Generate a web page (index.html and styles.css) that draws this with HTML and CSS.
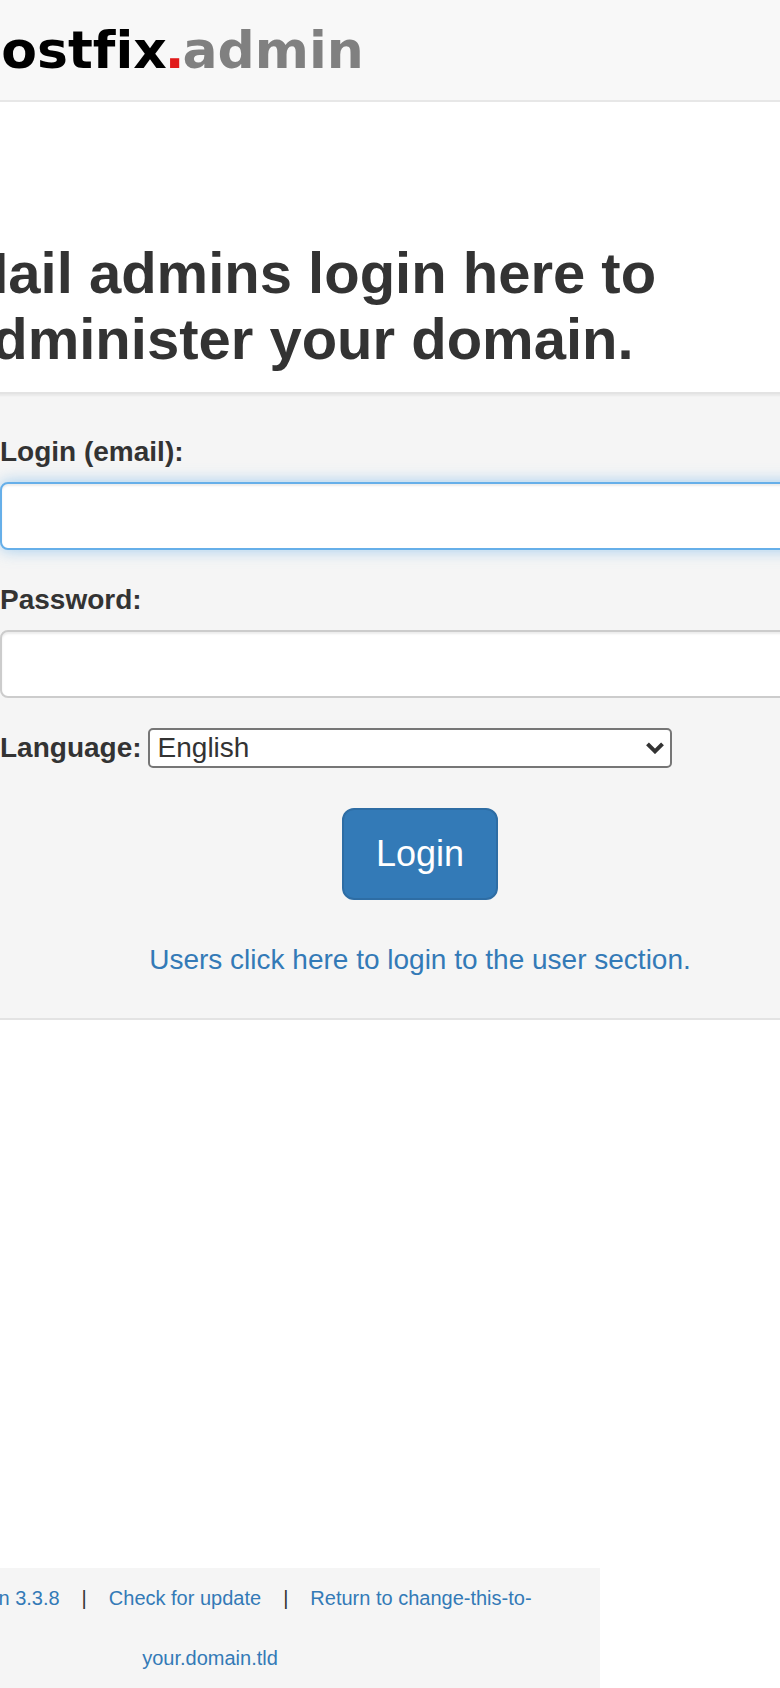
FILE: index.html
```html
<!DOCTYPE html>
<html lang="en">
<head>
<meta charset="utf-8">
<meta name="viewport" content="width=device-width, initial-scale=1">
<title>Postfix Admin - Login</title>
<link rel="stylesheet" href="styles.css">
</head>
<body class="page">
  <header class="navbar">
    <div class="logo"><span class="logo-name">postfix</span><span class="logo-dot">.</span><span class="logo-admin">admin</span></div>
  </header>

  <main class="container">
    <h2 class="title">Mail admins login here to administer your domain.</h2>
    <form class="well">
      <div class="group">
        <label class="label" for="username">Login (email):</label>
        <input class="control control-active" type="text" id="username" name="username">
      </div>
      <div class="group">
        <label class="label" for="password">Password:</label>
        <input class="control" type="password" id="password" name="password">
      </div>
      <div class="language">
        <label class="label" for="lang">Language:</label>
        <div class="select-wrap">
          <select class="select" id="lang" name="lang">
            <option selected>English</option>
          </select>
          <svg class="chevron" viewBox="0 0 18 12" aria-hidden="true"><path d="M1.5 1.8 9 9.3l7.5-7.5" fill="none" stroke="#333" stroke-width="4"/></svg>
        </div>
      </div>
      <button class="btn" type="button">Login</button>
      <a class="user-link" href="#">Users click here to login to the user section.</a>
    </form>
  </main>

  <footer class="footer">
    <a class="link" href="#">Postfix Admin 3.3.8</a><span class="sep">|</span><a class="link" href="#">Check for update</a><span class="sep">|</span><a class="link" href="#">Return to change-this-to-your.domain.tld</a>
  </footer>
</body>
</html>
```

FILE: styles.css
```css
* {
  box-sizing: border-box;
}

.page {
  display: flex;
  flex-direction: column;
  min-height: 100vh;
  margin: 0;
  overflow-x: hidden;
  background: #fff;
  color: #333;
  font: 28px/40px "Helvetica Neue", Helvetica, Arial, "Liberation Sans", sans-serif;
}

.navbar {
  display: flex;
  align-items: center;
  height: 102px;
  background: #f8f8f8;
  border-bottom: 2px solid #e7e7e7;
}

.logo {
  display: flex;
  align-items: baseline;
  margin-left: -36px;
  font: bold 52px/60px "DejaVu Sans", Verdana, sans-serif;
  font-variant-ligatures: none;
  white-space: nowrap;
}

.logo-name {
  color: #000;
}

.logo-dot {
  margin: 0 -2px;
  color: #e11b1b;
}

.logo-admin {
  color: #808080;
}

/* The container is wider than the window and bleeds off both sides. */
.container {
  margin: 138px -100px 0 -40px;
}

.title {
  max-width: 840px;
  margin: 0 0 20px;
  font-size: 58px;
  font-weight: bold;
  line-height: 66px;
}

.well {
  display: flex;
  flex-direction: column;
  padding: 38px;
  background: #f5f5f5;
  border: 2px solid #e3e3e3;
  border-radius: 8px;
  box-shadow: inset 0 2px 2px rgba(0, 0, 0, 0.05);
}

.group {
  display: flex;
  flex-direction: column;
  gap: 10px;
  margin-bottom: 30px;
}

.label {
  font-weight: bold;
}

.control {
  width: 100%;
  height: 68px;
  padding: 12px 24px;
  background: #fff;
  border: 2px solid #ccc;
  border-radius: 8px;
  outline: none;
  box-shadow: inset 0 2px 2px rgba(0, 0, 0, 0.075);
  color: #555;
  font: inherit;
}

.control-active,
.control:focus {
  border-color: #66afe9;
  box-shadow: inset 0 2px 2px rgba(0, 0, 0, 0.075), 0 0 16px rgba(102, 175, 233, 0.6);
}

.language {
  display: flex;
  gap: 6px;
  margin-bottom: 40px;
}

.select-wrap {
  position: relative;
  flex: 0 1 524px;
}

.select {
  display: block;
  width: 100%;
  height: 40px;
  padding: 0 40px 0 8px;
  appearance: none;
  background: #fff;
  border: 2px solid #767676;
  border-radius: 5px;
  color: #333;
  font: inherit;
  line-height: 36px;
}

.chevron {
  position: absolute;
  top: 14px;
  right: 8px;
  width: 18px;
  height: 12px;
  pointer-events: none;
}

.btn {
  align-self: center;
  margin: 0 0 40px;
  padding: 20px 32px;
  background: #337ab7;
  border: 2px solid #2e6da4;
  border-radius: 12px;
  color: #fff;
  font: inherit;
  font-size: 36px;
  line-height: 48px;
}

.user-link {
  align-self: center;
  color: #337ab7;
  text-decoration: none;
}

.footer {
  width: 100%;
  margin: auto 0 0 -180px;
  padding: 0 40px;
  background: #f5f5f5;
  font-size: 20px;
  line-height: 60px;
  text-align: center;
}

.link {
  color: #337ab7;
  text-decoration: none;
}

.sep {
  margin: 0 22px;
}
```
